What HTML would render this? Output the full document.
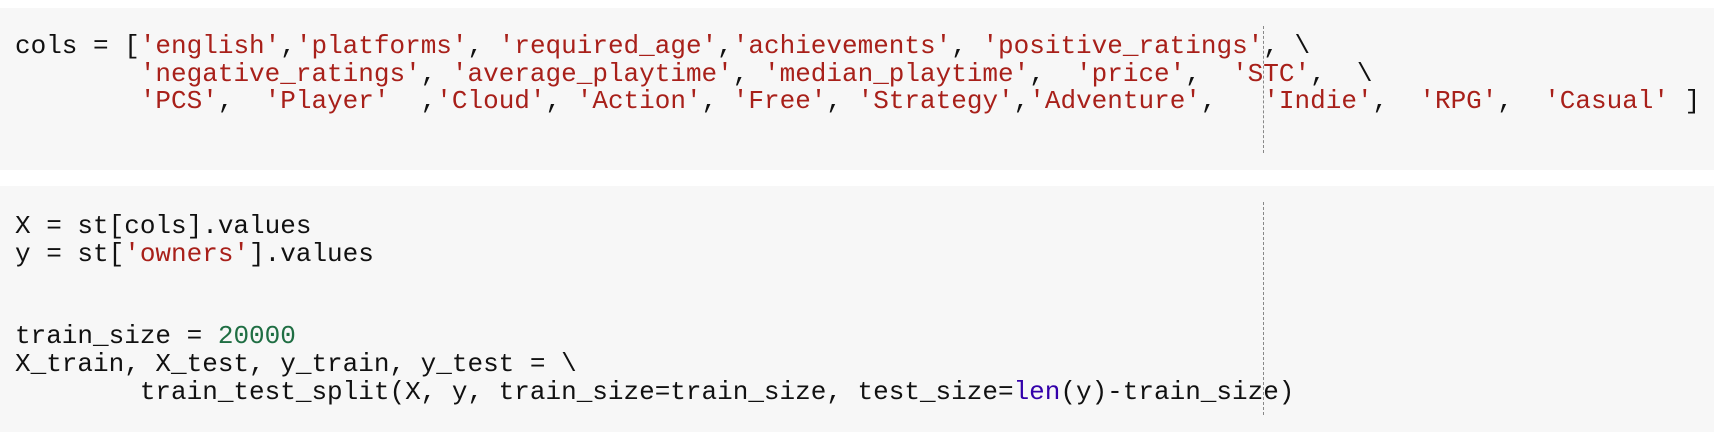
<!DOCTYPE html>
<html><head><meta charset="utf-8"><style>
html,body{margin:0;padding:0;background:#fff;width:1714px;height:440px;overflow:hidden}
.cell{position:absolute;left:0;width:1714px;background:#f7f7f7}
pre{position:absolute;left:15px;margin:0;font-family:"Liberation Mono",monospace;font-size:26px;line-height:27.6px;color:#111;white-space:pre}
.s{color:#a8201a}.n{color:#1f6e43}.b{color:#3300aa}
.ruler{position:absolute;left:1263px;width:0;border-left:1.5px dashed #888}
</style></head><body>
<div class="cell" style="top:8px;height:162px"></div>
<div class="cell" style="top:186px;height:246px"></div>
<div class="ruler" style="top:26px;height:127px"></div>
<div class="ruler" style="top:202px;height:213px"></div>
<pre style="top:33px">cols = [<span class="s">'english'</span>,<span class="s">'platforms'</span>, <span class="s">'required_age'</span>,<span class="s">'achievements'</span>, <span class="s">'positive_ratings'</span>, \
        <span class="s">'negative_ratings'</span>, <span class="s">'average_playtime'</span>, <span class="s">'median_playtime'</span>,  <span class="s">'price'</span>,  <span class="s">'STC'</span>,  \
        <span class="s">'PCS'</span>,  <span class="s">'Player'</span>  ,<span class="s">'Cloud'</span>, <span class="s">'Action'</span>, <span class="s">'Free'</span>, <span class="s">'Strategy'</span>,<span class="s">'Adventure'</span>,   <span class="s">'Indie'</span>,  <span class="s">'RPG'</span>,  <span class="s">'Casual'</span> ]</pre>
<pre style="top:213px">X = st[cols].values
y = st[<span class="s">'owners'</span>].values


train_size = <span class="n">20000</span>
X_train, X_test, y_train, y_test = \
        train_test_split(X, y, train_size=train_size, test_size=<span class="b">len</span>(y)-train_size)</pre>
</body></html>
